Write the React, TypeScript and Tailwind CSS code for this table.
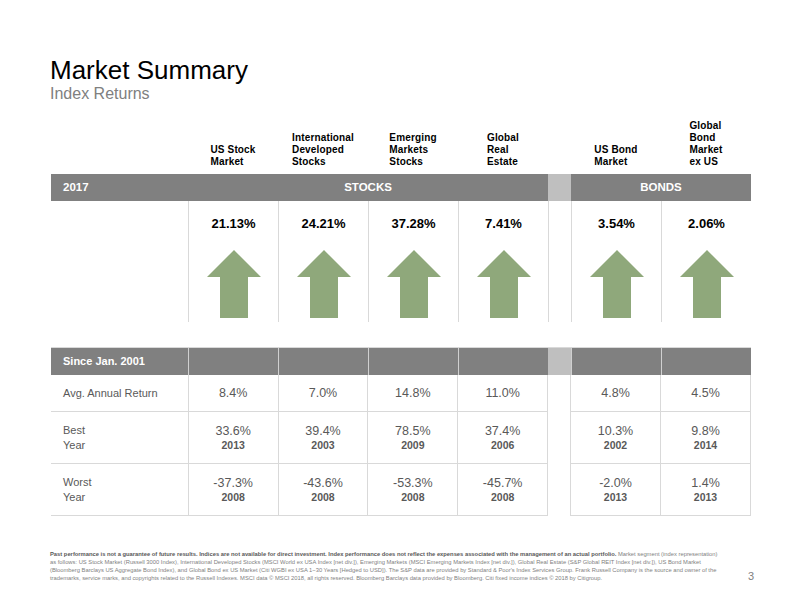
import React from "react";

type Col = {
  name: string[];
  pct: string;
  avg: string;
  best: string;
  bestYear: string;
  worst: string;
  worstYear: string;
};

const stocks: Col[] = [
  { name: ["US Stock", "Market"], pct: "21.13%", avg: "8.4%", best: "33.6%", bestYear: "2013", worst: "-37.3%", worstYear: "2008" },
  { name: ["International", "Developed", "Stocks"], pct: "24.21%", avg: "7.0%", best: "39.4%", bestYear: "2003", worst: "-43.6%", worstYear: "2008" },
  { name: ["Emerging", "Markets", "Stocks"], pct: "37.28%", avg: "14.8%", best: "78.5%", bestYear: "2009", worst: "-53.3%", worstYear: "2008" },
  { name: ["Global", "Real", "Estate"], pct: "7.41%", avg: "11.0%", best: "37.4%", bestYear: "2006", worst: "-45.7%", worstYear: "2008" },
];

const bonds: Col[] = [
  { name: ["US Bond", "Market"], pct: "3.54%", avg: "4.8%", best: "10.3%", bestYear: "2002", worst: "-2.0%", worstYear: "2013" },
  { name: ["Global", "Bond", "Market", "ex US"], pct: "2.06%", avg: "4.5%", best: "9.8%", bestYear: "2014", worst: "1.4%", worstYear: "2013" },
];

const UpArrow = () => (
  <svg width="54" height="68" viewBox="0 0 54 68">
    <path d="M27 0 L54 27 L41 27 L41 68 L13 68 L13 27 L0 27 Z" fill="#8fa87b" />
  </svg>
);

const ColHeader = ({ lines }: { lines: string[] }) => (
  <div className="w-[90px] flex justify-center items-end">
    <div className="text-left text-[10px] leading-[12px] font-bold text-black tracking-[0.15px]">
      {lines.map((l) => (
        <div key={l}>{l}</div>
      ))}
    </div>
  </div>
);

const TopCell = ({ col }: { col: Col }) => (
  <div className="w-[90px] h-[121px] border-l border-[#d9d9d9] flex flex-col items-center">
    <div className="pt-[15px] text-[13px] leading-[16px] font-bold text-black">{col.pct}</div>
    <div className="mt-[18px]">
      <UpArrow />
    </div>
  </div>
);

const ValueCell = ({ value, year, h }: { value: string; year?: string; h: string }) => (
  <div className={`w-[90px] ${h} border-l border-b border-[#d9d9d9] flex flex-col items-center justify-center text-[#595959]`}>
    <div className="text-[12.5px] leading-[14px]">{value}</div>
    {year && <div className="text-[10.5px] leading-[14px] font-bold">{year}</div>}
  </div>
);

const rows = [
  { label: ["Avg. Annual Return"], h: "h-[37px]", get: (c: Col) => ({ value: c.avg }) },
  { label: ["Best", "Year"], h: "h-[52px]", get: (c: Col) => ({ value: c.best, year: c.bestYear }) },
  { label: ["Worst", "Year"], h: "h-[52px]", get: (c: Col) => ({ value: c.worst, year: c.worstYear }) },
];

export default function App() {
  return (
    <div className="w-[786px] h-[606px] bg-white font-['Liberation_Sans',Arial,sans-serif] overflow-hidden">
      {/* Title */}
      <div className="pl-[50px] pt-[55px]">
        <h1 className="text-[26px] leading-[30px] text-black">Market Summary</h1>
        <p className="text-[16px] leading-[18px] text-[#808080]">Index Returns</p>
      </div>

      <div className="ml-[51px] mt-[17px] w-[700px]">
        {/* Column names */}
        <div className="flex h-[48px]">
          <div className="w-[137px]" />
          {stocks.map((c) => (
            <ColHeader key={c.pct} lines={c.name} />
          ))}
          <div className="w-[23px]" />
          {bonds.map((c) => (
            <ColHeader key={c.pct} lines={c.name} />
          ))}
        </div>

        {/* 2017 bar */}
        <div className="mt-[6px] flex h-[27px] bg-[#808080] text-white font-bold text-[11.5px]">
          <div className="w-[137px] pl-[12px] flex items-center">2017</div>
          <div className="w-[360px] flex items-center justify-center">STOCKS</div>
          <div className="w-[23px] bg-[#bfbfbf]" />
          <div className="w-[180px] flex items-center justify-center">BONDS</div>
        </div>

        {/* 2017 returns */}
        <div className="flex">
          <div className="w-[137px]" />
          {stocks.map((c) => (
            <TopCell key={c.pct} col={c} />
          ))}
          <div className="w-[23px] h-[121px] border-l border-[#d9d9d9]" />
          {bonds.map((c) => (
            <TopCell key={c.pct} col={c} />
          ))}
        </div>

        {/* Since bar */}
        <div className="mt-[25px] flex h-[28px] bg-[#808080] border-t border-[#d9d9d9]">
          <div className="w-[137px] pl-[12px] flex items-center text-white font-bold text-[11px]">Since Jan. 2001</div>
          {stocks.map((c) => (
            <div key={c.pct} className="w-[90px] border-l border-[#d0d0d0]" />
          ))}
          <div className="w-[23px] bg-[#bfbfbf]" />
          {bonds.map((c) => (
            <div key={c.pct} className="w-[90px] border-l border-[#d0d0d0]" />
          ))}
        </div>

        {/* Data rows */}
        {rows.map((r) => (
          <div key={r.label[0]} className="flex">
            <div className={`w-[137px] ${r.h} border-b border-[#d9d9d9] pl-[12px] flex flex-col justify-center text-[11px] leading-[15px] text-[#595959]`}>
              {r.label.map((l) => (
                <div key={l}>{l}</div>
              ))}
            </div>
            {stocks.map((c) => (
              <ValueCell key={c.pct} h={r.h} {...r.get(c)} />
            ))}
            <div className={`w-[23px] ${r.h} border-l border-[#d9d9d9]`} />
            {bonds.map((c, i) => (
              <div key={c.pct} className={i === 1 ? "border-r border-[#d9d9d9]" : ""}>
                <ValueCell h={r.h} {...r.get(c)} />
              </div>
            ))}
          </div>
        ))}
      </div>

      {/* Footnote */}
      <div className="mt-[34px] pl-[50px] pr-[32px] flex items-end justify-between">
        <div className="text-[5.8px] leading-[8px] text-[#7f7f7f] whitespace-nowrap">
          <div>
            <span className="font-bold text-[#595959]">
              Past performance is not a guarantee of future results. Indices are not available for direct investment. Index performance does not reflect the expenses associated with the management of an actual portfolio.
            </span>{" "}
            Market segment (index representation)
          </div>
          <div>
            as follows: US Stock Market (Russell 3000 Index), International Developed Stocks (MSCI World ex USA Index [net div.]), Emerging Markets (MSCI Emerging Markets Index [net div.]), Global Real Estate (S&amp;P Global REIT Index [net div.]), US Bond Market
          </div>
          <div>
            (Bloomberg Barclays US Aggregate Bond Index), and Global Bond ex US Market (Citi WGBI ex USA 1−30 Years [Hedged to USD]). The S&amp;P data are provided by Standard &amp; Poor's Index Services Group. Frank Russell Company is the source and owner of the
          </div>
          <div>
            trademarks, service marks, and copyrights related to the Russell Indexes. MSCI data © MSCI 2018, all rights reserved. Bloomberg Barclays data provided by Bloomberg. Citi fixed income indices © 2018 by Citigroup.
          </div>
        </div>
        <div className="text-[11px] leading-[12px] text-[#808080]">3</div>
      </div>
    </div>
  );
}
